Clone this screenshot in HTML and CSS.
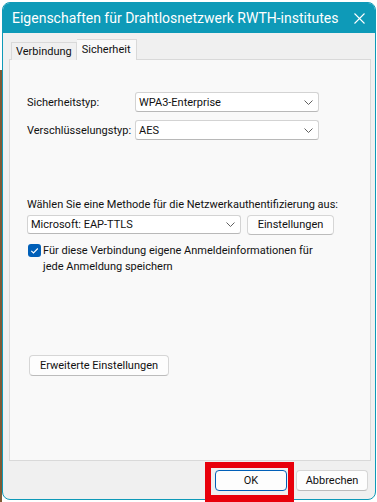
FILE: index.html
```html
<!DOCTYPE html>
<html>

<head>
    <title>Eigenschaften für Drahtlosnetzwerk RWTH-institutes</title>
    <link rel="stylesheet" href="styles.css">
</head>

<body>
    <div class="window">
        <div class="titlebar">
            <span class="title">Eigenschaften für Drahtlosnetzwerk RWTH-institutes</span>
            <svg class="close" width="11" height="11" viewBox="0 0 11 11">
                <path d="M0.5 0.5 L10.5 10.5 M10.5 0.5 L0.5 10.5" stroke="#fff" stroke-width="1.1" fill="none" />
            </svg>
        </div>

        <div class="content">
            <div class="tabs">
                <div class="tab">Verbindung</div>
                <div class="tab active">Sicherheit</div>
            </div>

            <div class="panel">
                <div class="field-row first">
                    <span class="field-label">Sicherheitstyp:</span>
                    <div class="select">
                        <span>WPA3-Enterprise</span>
                        <svg class="chevron" width="9" height="5" viewBox="0 0 9 5">
                            <path d="M0.5 0.5 L4.5 4.5 L8.5 0.5" stroke="#606060" stroke-width="1" fill="none" />
                        </svg>
                    </div>
                </div>
                <div class="field-row">
                    <span class="field-label">Verschlüsselungstyp:</span>
                    <div class="select">
                        <span>AES</span>
                        <svg class="chevron" width="9" height="5" viewBox="0 0 9 5">
                            <path d="M0.5 0.5 L4.5 4.5 L8.5 0.5" stroke="#606060" stroke-width="1" fill="none" />
                        </svg>
                    </div>
                </div>

                <div class="method-label">Wählen Sie eine Methode für die Netzwerkauthentifizierung aus:</div>
                <div class="method-row">
                    <div class="select combo">
                        <span>Microsoft: EAP-TTLS</span>
                        <svg class="chevron" width="9" height="5" viewBox="0 0 9 5">
                            <path d="M0.5 0.5 L4.5 4.5 L8.5 0.5" stroke="#606060" stroke-width="1" fill="none" />
                        </svg>
                    </div>
                    <button class="btn settings">Einstellungen</button>
                </div>

                <div class="check-row">
                    <span class="checkbox">
                        <svg width="13" height="13" viewBox="0 0 13 13">
                            <path d="M3.3 6.8 L5.5 9 L9.8 4.5" stroke="#fff" stroke-width="1.1" fill="none" />
                        </svg>
                    </span>
                    <span class="check-text">Für diese Verbindung eigene Anmeldeinformationen für jede Anmeldung speichern</span>
                </div>

                <button class="btn advanced">Erweiterte Einstellungen</button>
            </div>

            <div class="footer">
                <button class="btn ok">OK</button>
                <button class="btn">Abbrechen</button>
            </div>
        </div>
    </div>

    <div class="highlight"></div>
</body>

</html>
```

FILE: styles.css
```css
html,
body {
    margin: 0;
    height: 100%;
}

body {
    font-family: Roboto, "Liberation Sans", sans-serif;
    font-size: 11px;
    color: #111;
    background: linear-gradient(#ffffff 70px, #7d5a34 70px) left top / 2px 100% no-repeat,
        linear-gradient(#fff, #fff);
    padding: 2px 1px 2px 2px;
    box-sizing: border-box;
    position: relative;
}

.window {
    height: 498px;
    border: 1px solid #0e9ab8;
    border-radius: 8px;
    overflow: hidden;
    display: flex;
    flex-direction: column;
    background-color: #f0f0f0;
    box-sizing: border-box;
}

.titlebar {
    height: 30px;
    flex: none;
    background-color: #0e9ab8;
    display: flex;
    align-items: center;
    padding: 0 9px;
}

.title {
    color: #fff;
    font-size: 14px;
    flex: 1;
    white-space: nowrap;
}

.close {
    margin-right: 1px;
    margin-top: 1px;
}

.content {
    flex: 1;
    display: flex;
    flex-direction: column;
    padding: 7px 4px 0 6px;
}

.tabs {
    display: flex;
    align-items: flex-end;
    height: 20px;
    padding-left: 2px;
    margin-bottom: -1px;
    position: relative;
    z-index: 1;
}

.tab {
    height: 18px;
    line-height: 17px;
    padding: 0 4px;
    border: 1px solid #d9d9d9;
    border-bottom: none;
    background-color: #f0f0f0;
    box-sizing: border-box;
    white-space: nowrap;
}

.tab.active {
    height: 21px;
    padding: 0 5px;
    line-height: 20px;
    background-color: #f9f9f9;
    border-left: none;
}

.panel {
    height: 402px;
    border: 1px solid #d9d9d9;
    background-color: #f9f9f9;
    box-sizing: border-box;
    padding: 0 0 0 17px;
    display: flex;
    flex-direction: column;
    align-items: flex-start;
}

.field-row {
    display: flex;
    align-items: center;
    margin-top: 8px;
}

.field-row.first {
    margin-top: 32px;
}

.field-label {
    width: 108px;
    white-space: nowrap;
}

.select {
    width: 184px;
    height: 20px;
    box-sizing: border-box;
    border: 1px solid #d3d3d3;
    border-bottom-color: #b8b8b8;
    border-radius: 3px;
    background-color: #fff;
    display: flex;
    align-items: center;
    justify-content: space-between;
    padding: 0 5px 0 3px;
}

.method-label {
    margin-top: 57px;
    line-height: 16px;
    white-space: nowrap;
}

.method-row {
    display: flex;
    gap: 6px;
    margin-top: 2px;
}

.select.combo {
    width: 214px;
    height: 19px;
    padding-right: 5px;
}

.btn {
    font-family: inherit;
    font-size: 11px;
    color: #111;
    background-color: #fdfdfd;
    border: 1px solid #d6d6d6;
    border-bottom-color: #bcbcbc;
    border-radius: 4px;
    height: 21px;
    padding: 0;
    line-height: 18px;
}

.settings {
    width: 87px;
    height: 20px;
}

.check-row {
    display: flex;
    align-items: flex-start;
    margin-top: 8px;
    margin-left: 1px;
    width: 292px;
    line-height: 16px;
}

.checkbox {
    width: 13px;
    height: 13px;
    border-radius: 3px;
    background-color: #005fb8;
    flex: none;
    margin-top: 1px;
    margin-right: 2px;
    display: flex;
}

.advanced {
    width: 140px;
    margin-top: 80px;
    margin-left: 2px;
}

.footer {
    display: flex;
    justify-content: flex-end;
    gap: 9px;
    margin-top: 9px;
    padding-right: 3px;
}

.footer .btn {
    width: 72px;
}

.footer .btn.ok {
    border-color: #005fb8;
}

.highlight {
    position: absolute;
    left: 205px;
    top: 462px;
    width: 89px;
    height: 40px;
    border: 6px solid #e8000b;
    border-bottom-width: 7px;
    box-sizing: border-box;
}
```
